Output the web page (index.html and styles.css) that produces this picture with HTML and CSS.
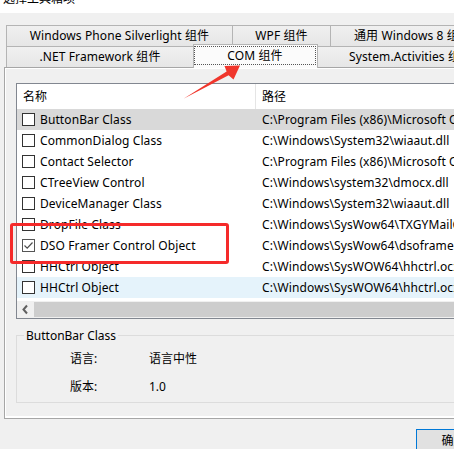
FILE: index.html
```html
<!DOCTYPE html>
<html lang="zh-CN">
<head>
<meta charset="utf-8">
<link rel="stylesheet" href="styles.css">
</head>
<body>
<div class="window">
  <div class="titlebar"><span class="title">选择工具箱项</span></div>
  <div class="tabs">
    <div class="tabrow">
      <div class="tab t-wp">Windows Phone Silverlight 组件</div>
      <div class="tab t-wpf">WPF 组件</div>
      <div class="tab t-uwp">通用 Windows 8 组件</div>
    </div>
    <div class="tabrow front">
      <div class="tab t-net">.NET Framework 组件</div>
      <div class="tab t-com selected"><div class="focus">COM 组件</div></div>
      <div class="tab t-sys">System.Activities 组件</div>
    </div>
  </div>
  <div class="panel">
    <div class="listview">
      <div class="lv-head">
        <div class="col1 hcell">名称</div>
        <div class="col2 hcell">路径</div>
      </div>
      <div class="lv-body">
        <div class="row sel"><div class="col1"><span class="cb"></span>ButtonBar Class</div><div class="col2">C:\Program Files (x86)\Microsoft Office\Office</div></div>
        <div class="row"><div class="col1"><span class="cb"></span>CommonDialog Class</div><div class="col2">C:\Windows\System32\wiaaut.dll</div></div>
        <div class="row"><div class="col1"><span class="cb"></span>Contact Selector</div><div class="col2">C:\Program Files (x86)\Microsoft Office\Office</div></div>
        <div class="row"><div class="col1"><span class="cb"></span>CTreeView Control</div><div class="col2">C:\Windows\system32\dmocx.dll</div></div>
        <div class="row"><div class="col1"><span class="cb"></span>DeviceManager Class</div><div class="col2">C:\Windows\System32\wiaaut.dll</div></div>
        <div class="row"><div class="col1"><span class="cb"></span>DropFile Class</div><div class="col2">C:\Windows\SysWow64\TXGYMailCtrl.dll</div></div>
        <div class="row"><div class="col1"><span class="cb checked"><svg viewBox="0 0 13 13" width="13" height="13"><path d="M2.5 6.5 L5.2 9.2 L10.5 3.5" fill="none" stroke="#4d4d4d" stroke-width="1.2"/></svg></span>DSO Framer Control Object</div><div class="col2">C:\Windows\SysWow64\dsoframer.ocx</div></div>
        <div class="row"><div class="col1"><span class="cb"></span>HHCtrl Object</div><div class="col2">C:\Windows\SysWOW64\hhctrl.ocx</div></div>
        <div class="row hover"><div class="col1"><span class="cb"></span>HHCtrl Object</div><div class="col2">C:\Windows\SysWOW64\hhctrl.ocx</div></div>
      </div>
      <div class="hscroll">
        <div class="sb-btn"><svg viewBox="0 0 17 17" width="17" height="17"><path d="M10 4.5 L6.5 8.5 L10 12.5" fill="none" stroke="#606060" stroke-width="2"/></svg></div>
        <div class="sb-thumb"></div>
      </div>
    </div>
    <div class="group">
      <span class="legend">ButtonBar Class</span>
      <div class="info-row"><span class="lbl">语言:</span><span class="val">语言中性</span></div>
      <div class="info-row second"><span class="lbl">版本:</span><span class="val">1.0</span></div>
    </div>
  </div>
  <div class="buttons"><button class="ok">确定</button></div>

  <div class="mark-box"></div>
  <svg class="mark-arrow" width="454" height="449" viewBox="0 0 454 449">
    <polygon points="240,65.5 224.5,66 226.6,71.4 183.5,98.8 228.6,75.3 233.5,79.5" fill="#f0362c"/>
  </svg>
</div>
</body>
</html>
```

FILE: styles.css
```css
* { box-sizing: border-box; }

html, body {
  margin: 0;
  padding: 0;
  background: #f0f0f0;
}

body {
  font-family: "Noto Sans", "Noto Sans CJK SC", sans-serif;
  font-size: 12px;
  color: #000;
}

.window {
  position: relative;
  width: 454px;
  height: 449px;
  overflow: hidden;
  background: #f0f0f0;
}

.titlebar {
  height: 13px;
  background: #fff;
  overflow: hidden;
  padding-left: 3px;
}

.title {
  display: block;
  line-height: 16px;
  margin-top: -9px;
  font-size: 12px;
}

.tabs {
  margin-top: 12px;
  padding-left: 6px;
  position: relative;
  z-index: 2;
}

.tabrow {
  display: flex;
  align-items: flex-end;
  height: 21px;
  white-space: nowrap;
}

.tab {
  flex: none;
  height: 21px;
  line-height: 20px;
  text-align: center;
  border: 1px solid #b4b4b4;
  border-bottom: none;
  background: linear-gradient(#f0f0f0, #e6e6e6);
  margin-left: -1px;
  overflow: hidden;
  letter-spacing: 0.1px;
}

.tab:first-child { margin-left: 0; }

.t-wp { width: 227px; }
.t-wpf { width: 99px; }
.t-uwp { width: 160px; text-align: left; padding-left: 23px; }
.t-net { width: 188px; }
.t-com { width: 125px; }
.t-sys { width: 160px; text-align: left; padding-left: 31px; }

.tab.selected {
  height: 24px;
  margin-bottom: -1px;
  background: #fbfbfb;
  padding: 1px 1px 0 0;
  line-height: normal;
  position: relative;
  z-index: 3;
}

.focus {
  height: 19px;
  line-height: 18px;
  border: 1px dotted #555;
  text-align: center;
}

.panel {
  position: relative;
  z-index: 1;
  margin-left: 4px;
  width: 470px;
  height: 352px;
  border: 1px solid #a6a6a6;
  border-right: none;
  background: #f0f0f0;
  box-shadow: inset 1px 1px 0 #fff, inset 0 -2px 0 #fff;
  padding: 15px 0 0 11px;
}

.listview {
  width: 460px;
  height: 236px;
  border: 1px solid #828790;
  background: #fff;
  letter-spacing: 0.1px;
}

.lv-head {
  display: flex;
  height: 25px;
  line-height: 25px;
}

.col1 {
  flex: none;
  width: 239px;
  display: flex;
  align-items: center;
  white-space: nowrap;
  overflow: hidden;
}

.col2 {
  flex: none;
  padding-left: 6px;
  white-space: nowrap;
  overflow: hidden;
}

.hcell.col1 {
  padding-left: 6px;
  border-right: 1px solid #e5e5e5;
}

.hcell.col2 { padding-left: 6px; }

.lv-body { height: 192px; }

.row {
  display: flex;
  height: 21px;
  line-height: 21px;
}

.row .col1 { padding-left: 5px; }

.row.sel { background: #d9d9d9; }
.row.hover { background: #e5f3fb; }

.cb {
  flex: none;
  width: 13px;
  height: 13px;
  border: 1px solid #333;
  background: #fff;
  margin-right: 5px;
  position: relative;
}

.cb.checked { border-color: #555; }

.cb svg {
  display: block;
  margin: -1px 0 0 -1px;
}

.hscroll {
  display: flex;
  height: 17px;
  background: #f0f0f0;
}

.sb-btn {
  flex: none;
  width: 17px;
  height: 17px;
}

.sb-btn svg { display: block; }

.sb-thumb {
  flex: 1;
  height: 15px;
  margin-top: 1px;
  background: #cdcdcd;
}

.group {
  margin-top: 16px;
  width: 460px;
  height: 68px;
  border: 1px solid #dcdcdc;
  border-right: none;
}

.legend {
  display: block;
  width: max-content;
  margin: -9px 0 0 7px;
  padding: 0 2px;
  line-height: 17px;
  background: #f0f0f0;
}

.info-row {
  display: flex;
  height: 20px;
  line-height: 20px;
  margin-top: 5px;
  padding-left: 53px;
}

.info-row.second { margin-top: 8px; }

.lbl { width: 79px; flex: none; }

.buttons {
  padding: 10px 0 0 416px;
}

.ok {
  display: block;
  width: 75px;
  height: 23px;
  margin: 0;
  padding: 0;
  border: 1px solid #0078d7;
  background: #e1e1e1;
  font: inherit;
  font-size: 12px;
  color: #000;
  line-height: 20px;
  text-align: center;
}

.mark-box {
  position: absolute;
  left: 10px;
  top: 223px;
  width: 219px;
  height: 41px;
  border: 3px solid #f52a2a;
  border-radius: 3px;
  z-index: 5;
}

.mark-arrow {
  position: absolute;
  left: 0;
  top: 0;
  z-index: 6;
  pointer-events: none;
}
```
